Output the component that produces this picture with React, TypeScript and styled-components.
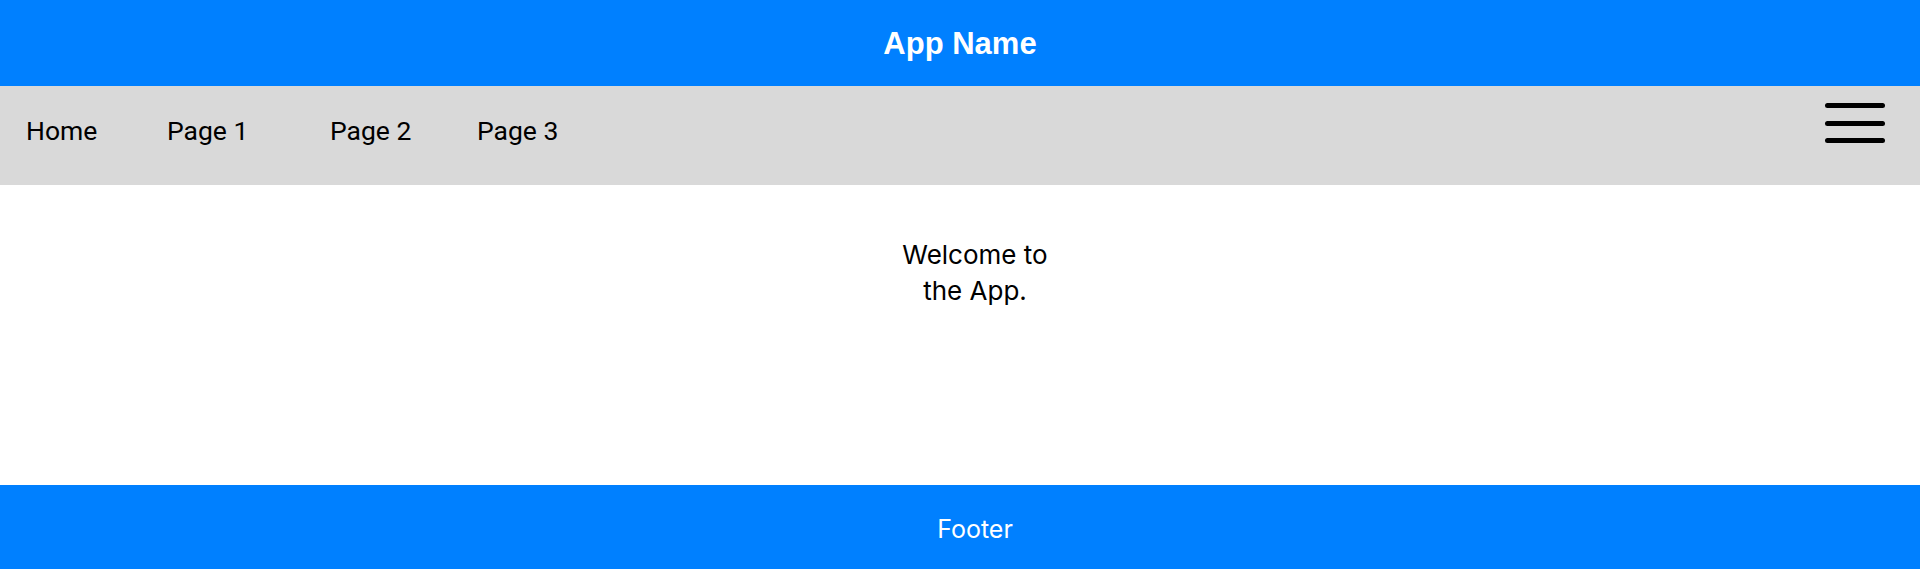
import React from "react";
import styled, { createGlobalStyle } from "styled-components";

const Global = createGlobalStyle`
  html, body { margin: 0; padding: 0; background: #ffffff; }
  #root { min-height: 569px; }
`;

const Page = styled.div`
  display: flex;
  flex-direction: column;
  height: 569px;
  width: 1920px;
  overflow: hidden;
`;

const Header = styled.header`
  height: 86px;
  background: #0080ff;
  display: flex;
  align-items: center;
  justify-content: center;
`;

const Title = styled.h1`
  margin: 1px 0 0 0;
  font-family: "Liberation Sans", Arial, sans-serif;
  font-weight: 700;
  font-size: 31px;
  color: #ffffff;
  line-height: 1;
`;

const NavBar = styled.nav`
  height: 99px;
  background: #d9d9d9;
  display: flex;
  align-items: flex-start;
  justify-content: space-between;
  padding: 0 35px 0 26px;
`;

const NavLinks = styled.div`
  display: flex;
  padding-top: 30px;
`;

const NavLink = styled.a<{ $w: number }>`
  width: ${(p) => p.$w}px;
  font-family: Roboto, "Liberation Sans", sans-serif;
  font-size: 26.5px;
  color: #000000;
  text-decoration: none;
  line-height: 30px;
`;

const Burger = styled.button`
  margin-top: 17px;
  width: 60px;
  height: 40px;
  padding: 0;
  border: none;
  background: transparent;
  display: flex;
  flex-direction: column;
  justify-content: space-between;
  align-items: center;
`;

const BurgerLine = styled.span`
  display: block;
  width: 60px;
  height: 5px;
  border-radius: 3px;
  background: #000000;
`;

const Main = styled.main`
  flex: 1;
  display: flex;
  justify-content: center;
  padding-left: 30px;
  padding-top: 52px;
`;

const Welcome = styled.p`
  margin: 0;
  width: 176px;
  text-align: center;
  font-family: Inter, "Open Sans", sans-serif;
  font-size: 26px;
  line-height: 36px;
  color: #000000;
`;

const Footer = styled.footer`
  height: 84px;
  background: #0080ff;
  display: flex;
  align-items: center;
  justify-content: center;
  padding-left: 30px;
`;

const FooterText = styled.span`
  font-family: Inter, "Open Sans", sans-serif;
  font-size: 25px;
  color: #ffffff;
  margin-top: 3px;
`;

const links = [
  { label: "Home", w: 141 },
  { label: "Page 1", w: 163 },
  { label: "Page 2", w: 147 },
  { label: "Page 3", w: 90 },
];

export default function App() {
  return (
    <>
      <Global />
      <Page>
        <Header>
          <Title>App Name</Title>
        </Header>
        <NavBar>
          <NavLinks>
            {links.map((l) => (
              <NavLink key={l.label} href="#" $w={l.w}>
                {l.label}
              </NavLink>
            ))}
          </NavLinks>
          <Burger aria-label="Menu">
            <BurgerLine />
            <BurgerLine />
            <BurgerLine />
          </Burger>
        </NavBar>
        <Main>
          <Welcome>Welcome to the App.</Welcome>
        </Main>
        <Footer>
          <FooterText>Footer</FooterText>
        </Footer>
      </Page>
    </>
  );
}
